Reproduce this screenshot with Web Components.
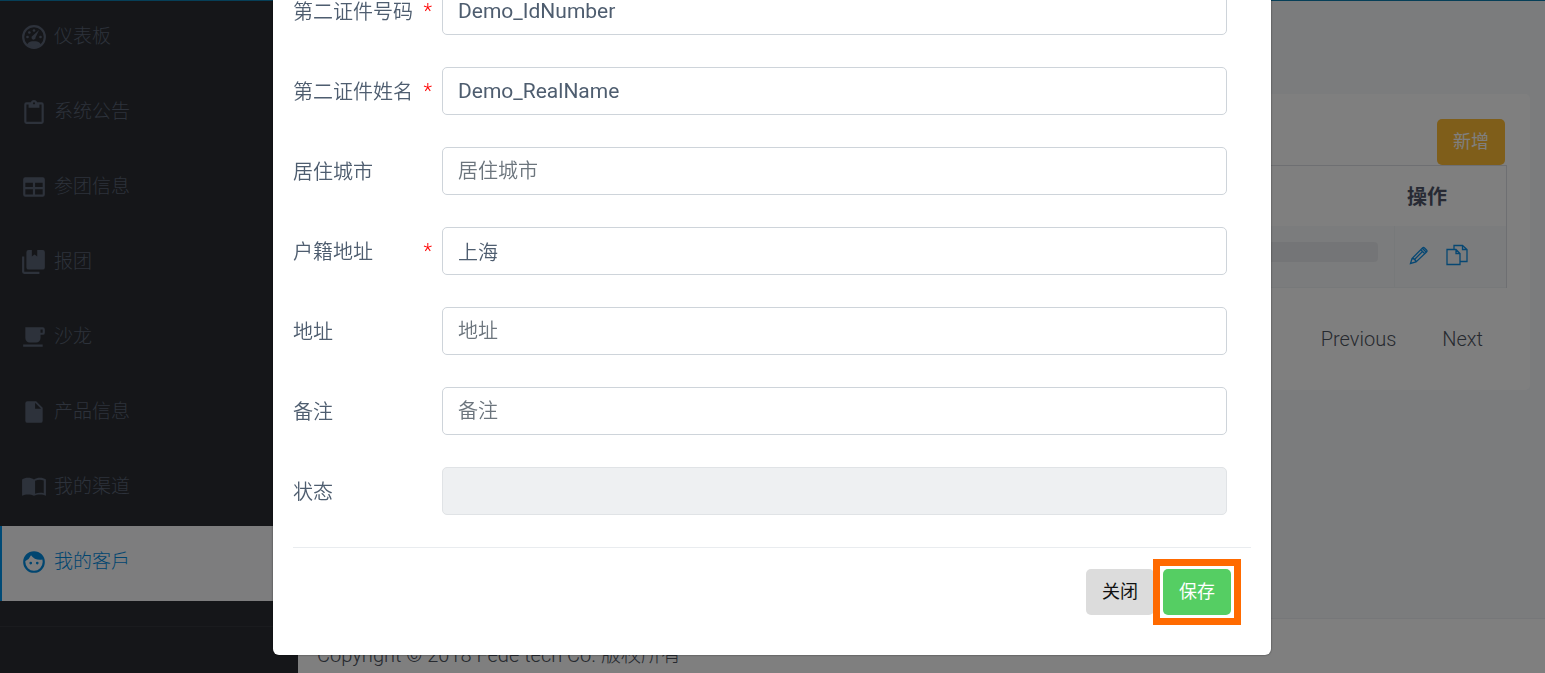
<!DOCTYPE html>
<html lang="zh-CN">
<head>
<meta charset="utf-8">
<title>我的客戶</title>
<style>
html, body { margin: 0; height: 100%; overflow: hidden; }
body { font: 300 20px/30px Roboto, "Noto Sans CJK SC", sans-serif; color: #4e5d6f; }
</style>
</head>
<body>
<admin-shell>
  <side-nav slot="nav">
    <nav-item icon="gauge">仪表板</nav-item>
    <nav-item icon="clipboard">系统公告</nav-item>
    <nav-item icon="table">参团信息</nav-item>
    <nav-item icon="books">报团</nav-item>
    <nav-item icon="cup">沙龙</nav-item>
    <nav-item icon="file">产品信息</nav-item>
    <nav-item icon="book">我的渠道</nav-item>
    <nav-item icon="face" active>我的客戶</nav-item>
  </side-nav>
  <customer-card></customer-card>
  <span slot="footer">Copyright © 2018 Fede tech Co. 版权所有</span>
</admin-shell>
<edit-dialog>
  <form-field label="第二证件号码" value="Demo_IdNumber" required></form-field>
  <form-field label="第二证件姓名" value="Demo_RealName" required></form-field>
  <form-field label="居住城市" hint="居住城市"></form-field>
  <form-field label="户籍地址" value="上海" required></form-field>
  <form-field label="地址" hint="地址"></form-field>
  <form-field label="备注" hint="备注"></form-field>
  <form-field label="状态" disabled></form-field>
  <action-button slot="actions" tone="plain">关闭</action-button>
  <action-button slot="actions" tone="success" marked>保存</action-button>
</edit-dialog>

<script>
function define(name, render) {
  customElements.define(name, class extends HTMLElement {
    connectedCallback() {
      if (this.shadowRoot) return;
      this.attachShadow({ mode: "open" }).innerHTML = render(this);
    }
  });
}

const icons = {
  gauge: '<circle cx="12" cy="12" r="10" fill="none" stroke="currentColor" stroke-width="2"/><path d="M5.500 19c1.500-2.600 4-3 6.500-3s5 .4 6.500 3c-3.500 3.500-9.500 3.500-13 0zM16.700 5.500L13.500 12.300a1.900 1.900 0 1 1-2.700-1.500z"/><circle cx="6" cy="12" r="1.200"/><circle cx="7.700" cy="7.800" r="1.200"/><circle cx="12" cy="6" r="1.200"/><circle cx="18" cy="12" r="1.200"/>',
  clipboard: '<path d="M19 3h-4.180C14.400 1.840 13.300 1 12 1s-2.400.84-2.820 2H5a2 2 0 0 0-2 2v16a2 2 0 0 0 2 2h14a2 2 0 0 0 2-2V5a2 2 0 0 0-2-2zm-7 0a1 1 0 1 1 0 2 1 1 0 0 1 0-2zm7 18H5V5h2v3h10V5h2z"/>',
  table: '<path d="M4 3h16a2 2 0 0 1 2 2v14a2 2 0 0 1-2 2H4a2 2 0 0 1-2-2V5a2 2 0 0 1 2-2zm0 5v4h7V8zm9 0v4h7V8zm-9 6v5h7v-5zm9 0v5h7v-5z"/>',
  books: '<path d="M3 7H1v14a2 2 0 0 0 2 2h14v-2H3z"/><path d="M7 1h3v6l2.500-2L15 7V1h5a2 2 0 0 1 2 2v14a2 2 0 0 1-2 2H7a2 2 0 0 1-2-2V3a2 2 0 0 1 2-2z"/>',
  cup: '<path d="M2 21h18v-2H2zM20 8h-2V5h2m0-2H4v10a4 4 0 0 0 4 4h6a4 4 0 0 0 4-4v-3h2a2 2 0 0 0 2-2V5a2 2 0 0 0-2-2z"/>',
  file: '<path d="M13 9V3.500L18.500 9M6 2a2 2 0 0 0-2 2v16a2 2 0 0 0 2 2h12a2 2 0 0 0 2-2V8l-6-6z"/>',
  book: '<path d="M12 5C9 3 4 3 1 5v15c3-1.500 8-1.500 11 0 3-1.500 8-1.500 11 0V5c-3-2-8-2-11 0zm9 12.700c-2.700-.8-5.600-.5-8 .5V6.200c2.400-1.200 5.600-1.300 8-.3z"/>',
  face: '<path d="M9 11.750a1.250 1.250 0 1 0 0 2.500 1.250 1.250 0 0 0 0-2.500zm6 0a1.250 1.250 0 1 0 0 2.500 1.250 1.250 0 0 0 0-2.500zM12 2a10 10 0 1 0 0 20 10 10 0 0 0 0-20zm0 18a8 8 0 0 1-8-8c0-.29.02-.58.05-.86A10.030 10.030 0 0 0 9.260 5.770 9.990 9.990 0 0 0 17.420 10c.78 0 1.530-.09 2.250-.26.21.71.33 1.470.33 2.260a8 8 0 0 1-8 8z"/>'
};

define("nav-item", el => `
<style>
:host { display: block; }
a { display: flex; align-items: center; gap: 7px; box-sizing: border-box; height: 75px; padding: 0 20px 3px 19px; border-left: 2px solid transparent;
  color: #5b6476; font-size: 19px; line-height: 30px; text-decoration: none; }
:host([active]) a { background: #fafafc; color: #008be0; border-color: #0094ec; }
svg { width: 26px; height: 26px; fill: currentColor; flex: none; }
</style>
<a href="#"><svg viewBox="0 0 24 24" aria-hidden="true">${icons[el.getAttribute("icon")]}</svg><slot></slot></a>`);

define("side-nav", () => `
<style>
:host { display: block; background: #2a2d33; height: 100%; }
nav { padding-bottom: 25px; border-bottom: 1px solid #34373c; }
</style>
<nav><slot></slot></nav>`);

define("admin-shell", () => `
<style>
:host { display: grid; grid-template-columns: 298px 1fr; height: 100%; box-sizing: border-box; border-top: 1px solid #0d7fb0; background: #f6f8fb; }
aside { min-height: 0; }
.page { display: flex; flex-direction: column; min-width: 0; }
main { flex: 1; padding: 93px 15px 0; }
footer { height: 55px; box-sizing: border-box; padding: 21px 19px 0; background: #fff; border-top: 1px solid #eceff3; color: #4e5460; white-space: nowrap; overflow: hidden; }
</style>
<aside><slot name="nav"></slot></aside>
<div class="page"><main><slot></slot></main><footer><slot name="footer"></slot></footer></div>`);

define("customer-card", () => `
<style>
:host { display: block; box-sizing: border-box; min-height: 296px; padding: 25px 23px 0; background: #fff; border-radius: 5px; }
.bar { display: flex; justify-content: flex-end; padding-right: 2px; }
table { width: 100%; border-collapse: separate; border-spacing: 0; border: 1px solid #dcdfe4; border-width: 1px 1px 0 0; table-layout: fixed; }
th { height: 60px; box-sizing: border-box; padding: 2px 0 0 13px; text-align: left; font-weight: 700; color: #4e5468; }
td { height: 62px; box-sizing: border-box; padding: 0 12px; background: #f6f8fa; border: 1px solid #eff2f5; border-width: 0 0 1px 1px; }
.last { width: 112px; box-sizing: border-box; }
.mask { height: 20px; margin: 0 4px 10px; border-radius: 4px; background: #e9ebef; }
.tools { display: flex; gap: 14px; align-items: center; padding-bottom: 4px; }
.tools a { display: flex; color: #0d8fe6; }
svg { width: 24px; height: 24px; fill: none; stroke: currentColor; stroke-width: 1.3; }
.pager { display: flex; justify-content: flex-end; gap: 46px; padding: 36px 24px 0; }
.pager a { color: #4e5460; text-decoration: none; }
</style>
<div class="bar"><action-button tone="warning">新增</action-button></div>
<table>
<thead><tr><th></th><th class="last">操作</th></tr></thead>
<tbody><tr><td><div class="mask"></div></td><td class="last"><div class="tools">
<a href="#" aria-label="编辑"><svg viewBox="0 0 24 24"><path d="M3.500 20.500l1.500-5L15.500 5q1-1 2 0l2 2q1 1 0 2L9 19zM5 15.500q3.500 0 4 3.500M13.800 6.700l4 4M15.300 5.200l4 4M7 17l8.500-8.500"/></svg></a>
<a href="#" aria-label="复制"><svg viewBox="0 0 24 24"><path d="M2 6.500h9l4 4v11H2zM11 6.500v4h4M9 6V2.500h8.500l4.500 4v12h-6.500M17.500 2.500v4H22"/></svg></a>
</div></td></tr></tbody>
</table>
<div class="pager"><a href="#">Previous</a><a href="#">Next</a></div>`);

define("action-button", () => `
<style>
:host { display: block; position: relative; }
button { display: block; width: 68px; height: 46px; padding: 0; border: 0; border-radius: 5px; font: inherit; font-size: 18px; font-weight: 400; color: #fff; }
:host([tone="plain"]) button { background: #dcdcdc; color: #111; }
:host([tone="success"]) button { background: #55ce63; }
:host([tone="warning"]) button { background: #ffbc34; }
:host([marked])::after { content: ""; position: absolute; inset: -10px; border: 7px solid #ff6a00; pointer-events: none; }
</style>
<button type="button"><slot></slot></button>`);

define("form-field", el => `
<style>
:host { display: grid; grid-template-columns: 149px 1fr; align-items: center; }
label { display: flex; justify-content: space-between; padding: 2px 10px 0 0; font-weight: 350; color: #4e5d6f; }
i { font-style: normal; line-height: 28px; color: #f00; }
input { box-sizing: border-box; width: 100%; height: 48px; padding: 0 15px; border: 1px solid #ced4da; border-radius: 5px; background: #fff; font: inherit; font-weight: 350; color: #4e5d6f; }
input.latin { font-weight: 400; font-size: 21px; }
input::placeholder { color: #6c757d; opacity: 1; }
input:disabled { background: #eef0f2; border-color: #e0e3e6; }
</style>
<label for="f"><span>${el.getAttribute("label")}</span>${el.hasAttribute("required") ? "<i>*</i>" : ""}</label>
<input id="f" type="text" class="${/^[\x20-\x7e]+$/.test(el.getAttribute("value") || "") ? "latin" : ""}" value="${el.getAttribute("value") || ""}" placeholder="${el.getAttribute("hint") || ""}"${el.hasAttribute("disabled") ? " disabled" : ""}>`);

define("edit-dialog", () => `
<style>
:host { position: fixed; inset: 0; display: flex; justify-content: center; align-items: flex-end; padding: 0 1px 18px 0; background: rgba(0,0,0,.5); overflow: hidden; }
section { box-sizing: border-box; width: 998px; max-width: 100%; flex: none; padding: 32px 20px 40px; background: #fff; border-radius: 6px; box-shadow: 0 0 2px rgba(0,0,0,.6); }
form { display: grid; gap: 32px; padding: 0 24px 32px 0; }
footer { display: flex; justify-content: flex-end; gap: 9px; padding: 21px 20px 0 0; border-top: 1px solid #e9ecef; }
</style>
<section role="dialog" aria-modal="true"><form><slot></slot></form><footer><slot name="actions"></slot></footer></section>`);
</script>
</body>
</html>
